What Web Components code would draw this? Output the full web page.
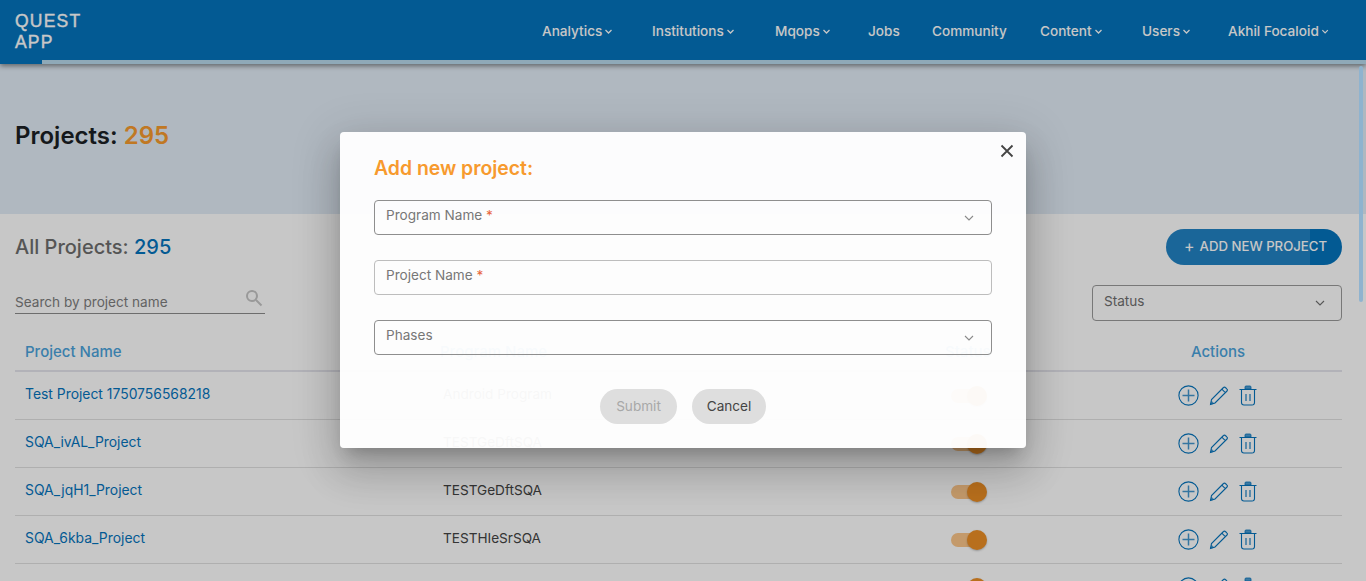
<!DOCTYPE html>
<html lang="en"><head><meta charset="utf-8"><title>Projects</title>
<style>
html,body{margin:0;height:581px;overflow:hidden;background:#fff;font-family:Inter,"Liberation Sans",sans-serif}
#page{display:block;position:relative;height:581px;overflow:hidden}
</style></head><body>
<div id="page">
  <app-header>
    <nav-item w="110" caret>Analytics</nav-item>
    <nav-item w="123" caret>Institutions</nav-item>
    <nav-item w="93" caret>Mqops</nav-item>
    <nav-item w="64">Jobs</nav-item>
    <nav-item w="108">Community</nav-item>
    <nav-item w="102" caret>Content</nav-item>
    <nav-item w="86" caret>Users</nav-item>
    <nav-item w="101" caret>Akhil Focaloid</nav-item>
  </app-header>
  <hero-banner>Projects: <b slot="count">295</b></hero-banner>
  <projects-panel>
    <project-row name="Test Project 1750756568218" program="Android Program"></project-row>
    <project-row name="SQA_ivAL_Project" program="TESTGeDftSQA"></project-row>
    <project-row name="SQA_jqH1_Project" program="TESTGeDftSQA"></project-row>
    <project-row name="SQA_6kba_Project" program="TESTHIeSrSQA"></project-row>
    <project-row></project-row>
  </projects-panel>
  <modal-overlay></modal-overlay>
  <scroll-thumb></scroll-thumb>
  <add-dialog>
    <form-field select required>Program Name</form-field>
    <form-field required>Project Name</form-field>
    <form-field select>Phases</form-field>
  </add-dialog>
</div>
<script>
const chevron=(s,c,w=1.3)=>`<svg width="${s}" height="${s}" viewBox="0 0 12 12" fill="none" stroke="${c}" stroke-width="${w}"><path d="M2 4l4 4 4-4"/></svg>`;
function def(name,html,init){
  customElements.define(name,class extends HTMLElement{
    constructor(){super();const r=this.attachShadow({mode:'open'});r.innerHTML=typeof html==='function'?html(this):html;}
    connectedCallback(){if(init&&!this._d){this._d=1;init(this)}}
  });
}
def('app-header',`<style>
:host{display:block;position:relative;z-index:2;height:64px;background:#0574bd;color:#fff;box-shadow:0 2px 5px rgba(0,0,0,.45)}
.bar{display:flex;height:60px;align-items:center;justify-content:space-between;padding:0 37px 0 15px;box-sizing:border-box}
.logo{font:400 17.500px/20.500px "Liberation Sans",sans-serif;letter-spacing:1.200px;-webkit-text-stroke:.4px #fff;color:#fff;margin-top:3px}
.logo span{display:block;height:20.500px}
nav{display:flex;height:60px;align-items:center}
.strip{display:flex;height:4px}.a{width:42px;background:#0574bd}.b{flex:1;background:#b8d9ec}
</style><div class="bar"><div class="logo"><span>QUEST</span><span>APP</span></div><nav><slot></slot></nav></div><div class="strip"><div class="a"></div><div class="b"></div></div>`);
def('nav-item',el=>`<style>
:host{display:block;width:${el.getAttribute('w')}px;font:500 13.6px Inter,sans-serif;color:#fff;white-space:nowrap;margin-top:2px}
.i{display:flex;align-items:center;gap:2px}svg{margin-top:1px}
</style><div class="i"><slot></slot>${el.hasAttribute('caret')?chevron(9,'#fff',1.7):''}</div>`);
def('hero-banner',`<style>
:host{display:flex;align-items:center;height:150px;padding:0 15px 8px;box-sizing:border-box;background:#e2ecf6;color:#1b1f25;font:600 24px Inter,sans-serif;white-space:pre}
::slotted(b){font-weight:600;color:#f79a2e}
</style><slot></slot><slot name="count"></slot>`);
def('projects-panel',`<style>
:host{display:block;padding:15px 24px 0 15px;background:#fff}
.top{display:flex;justify-content:space-between;align-items:flex-start;height:56px}
h2{margin:0;font:500 20px/36px Inter,sans-serif;color:#6e6e6e}h2 b{font-weight:500;color:#0574bd}
.btn{display:flex;align-items:center;gap:5px;box-sizing:border-box;padding:0 0 2px 18px;width:176px;height:36px;border-radius:18px;background:linear-gradient(90deg,#2283c4 0 144px,#0574bd 144px);color:#fff;font:500 13.200px Inter,sans-serif}
.btn span:first-child{font-size:16px;font-weight:400}
.filters{display:flex;justify-content:space-between;height:51px}
.search{display:flex;justify-content:space-between;align-items:center;box-sizing:border-box;width:250px;height:28px;margin-top:1px;border-bottom:1px solid #8c8c8c;font:13.6px Inter,sans-serif;color:#7e7e7e;padding-top:4px}
.search svg{margin:-8px 2px 0 0}
.status{display:flex;align-items:center;justify-content:space-between;box-sizing:border-box;width:250px;height:36px;padding:0 15px 4px 11px;border:1px solid #9a9a9a;border-radius:4px;font:13.6px Inter,sans-serif;color:#707070}
.status svg{margin-top:4px}
.head{display:grid;grid-template-columns:425px 505px 187px 210px;height:36px;box-sizing:border-box;border-bottom:2px solid #e4e4ec;font:500 15px/31px Inter,sans-serif;color:#4ba3dc}
.head div:first-child{padding-left:10px}.head div:last-child{text-align:center;padding-right:38px}
</style>
<div class="top"><h2>All Projects: <b>295</b></h2><div class="btn"><span>+</span><span>ADD NEW PROJECT</span></div></div>
<div class="filters"><div class="search"><span>Search by project name</span><svg width="18" height="18" viewBox="0 0 18 18" fill="none" stroke="#c4c4c4" stroke-width="2"><circle cx="7" cy="7" r="5"/><path d="M11 11l5.500 5.500"/></svg></div>
<div class="status"><span>Status</span>${chevron(12,'#707070',1.1)}</div></div>
<div class="head"><div>Project Name</div><div>Program Name</div><div>Status</div><div>Actions</div></div>
<slot></slot>`);
def('project-row',el=>`<style>
:host{display:grid;grid-template-columns:428px 502px 187px 210px;align-items:center;height:48px;box-sizing:border-box;border-bottom:1px solid #e0e0e0;font:13.6px Inter,sans-serif;color:#444}
.t{padding-bottom:4px}
.n{padding-left:10px;color:#0574bd;font-size:13.900px}
.a{display:flex;justify-content:center;align-items:center;gap:10px;padding-right:40px}
.sw{position:relative;width:34px;height:14px;margin:0 0 0 6px;border-radius:7px;background:#fbc68a}
.sw i{position:absolute;right:-2px;top:-3px;width:20px;height:20px;border-radius:50%;background:#ec8f26;box-shadow:0 1px 2px rgba(0,0,0,.25)}
svg{display:block;fill:none;stroke:#0574bd;stroke-width:1.100}
</style><div class="n t">${el.getAttribute('name')||''}</div><div class="t">${el.getAttribute('program')||''}</div>
<div><div class="sw"><i></i></div></div>
<div class="a">
<svg width="21" height="21" viewBox="0 0 21 21"><circle cx="10.500" cy="10.500" r="9.600"/><path stroke-width="1.500" stroke-opacity=".75" d="M10.500 4.500v12M4.500 10.500h12"/></svg>
<svg width="20" height="21" viewBox="0 0 20 21"><path d="M1.500 19.500l1-5L14.500 2.500a1.300 1.300 0 0 1 1.900 0l1.600 1.600a1.300 1.300 0 0 1 0 1.900L6 18zM12.800 4.200l3.500 3.500"/><path fill="#0574bd" fill-opacity=".7" stroke="none" d="M1.500 19.500l.8-4 3.200 3.200z"/></svg>
<svg width="18" height="21" viewBox="0 0 18 21"><path fill="#0574bd" fill-opacity=".7" stroke-width=".8" d="M6 4V2a1 1 0 0 1 1-1h4a1 1 0 0 1 1 1v2z"/><path d="M.5 4.500h17M2.500 4.500v13a2.500 2.500 0 0 0 2.500 2.500h8a2.500 2.500 0 0 0 2.500-2.500v-13M7 9v7M11 9v7"/></svg>
</div>`);
def('modal-overlay',`<style>:host{position:absolute;inset:0;z-index:3;background:rgba(0,0,0,.22)}</style>`);
def('scroll-thumb',`<style>:host{position:absolute;z-index:4;right:3px;top:66px;width:4px;height:236px;border-radius:2px;background:#8fb3cf}</style>`);
def('form-field',el=>`<style>
:host{display:flex;align-items:center;justify-content:space-between;box-sizing:border-box;height:35px;padding:0 16px 5px 11px;border:1px solid ${el.hasAttribute('select')?'#8e8e8e':'#bdbdbd'};border-radius:4px;font:13.6px Inter,sans-serif;color:#777}
i{font-style:normal;color:#e8663c}
svg{margin-top:5px}
</style><span><slot></slot>${el.hasAttribute('required')?' <i>*</i>':''}</span>${el.hasAttribute('select')?chevron(12,'#8a8a8a',1.1):''}`);
def('add-dialog',`<style>
:host{position:absolute;z-index:5;left:340px;top:132px;width:686px;height:316px;box-sizing:border-box;padding:24px 34px 0;border-radius:4px;background:rgba(255,255,255,.96);box-shadow:0 11px 15px -7px rgba(0,0,0,.2),0 24px 38px 3px rgba(0,0,0,.14),0 9px 46px 8px rgba(0,0,0,.12);display:flex;flex-direction:column}
h3{margin:0 0 19px;font:600 19.400px/25px Inter,sans-serif;color:#f79a2e}
.f{display:flex;flex-direction:column;gap:25px}
.x{position:absolute;right:12px;top:12px;display:block}
.b{display:flex;justify-content:center;gap:15px;margin-top:34px}
.b span{display:flex;align-items:center;justify-content:center;height:35px;padding-bottom:2px;box-sizing:border-box;border-radius:18px;background:#dedede;font:400 13.600px Inter,sans-serif}
.s{width:77px;color:#a8a8a8}.c{width:74px;color:#444}
</style>
<svg class="x" width="14" height="14" viewBox="0 0 14 14" stroke="#444" stroke-width="1.800" fill="none"><path d="M1.500 1.500l11 11M12.500 1.500l-11 11"/></svg>
<h3>Add new project:</h3><div class="f"><slot></slot></div>
<div class="b"><span class="s">Submit</span><span class="c">Cancel</span></div>`);
</script>
</body></html>
